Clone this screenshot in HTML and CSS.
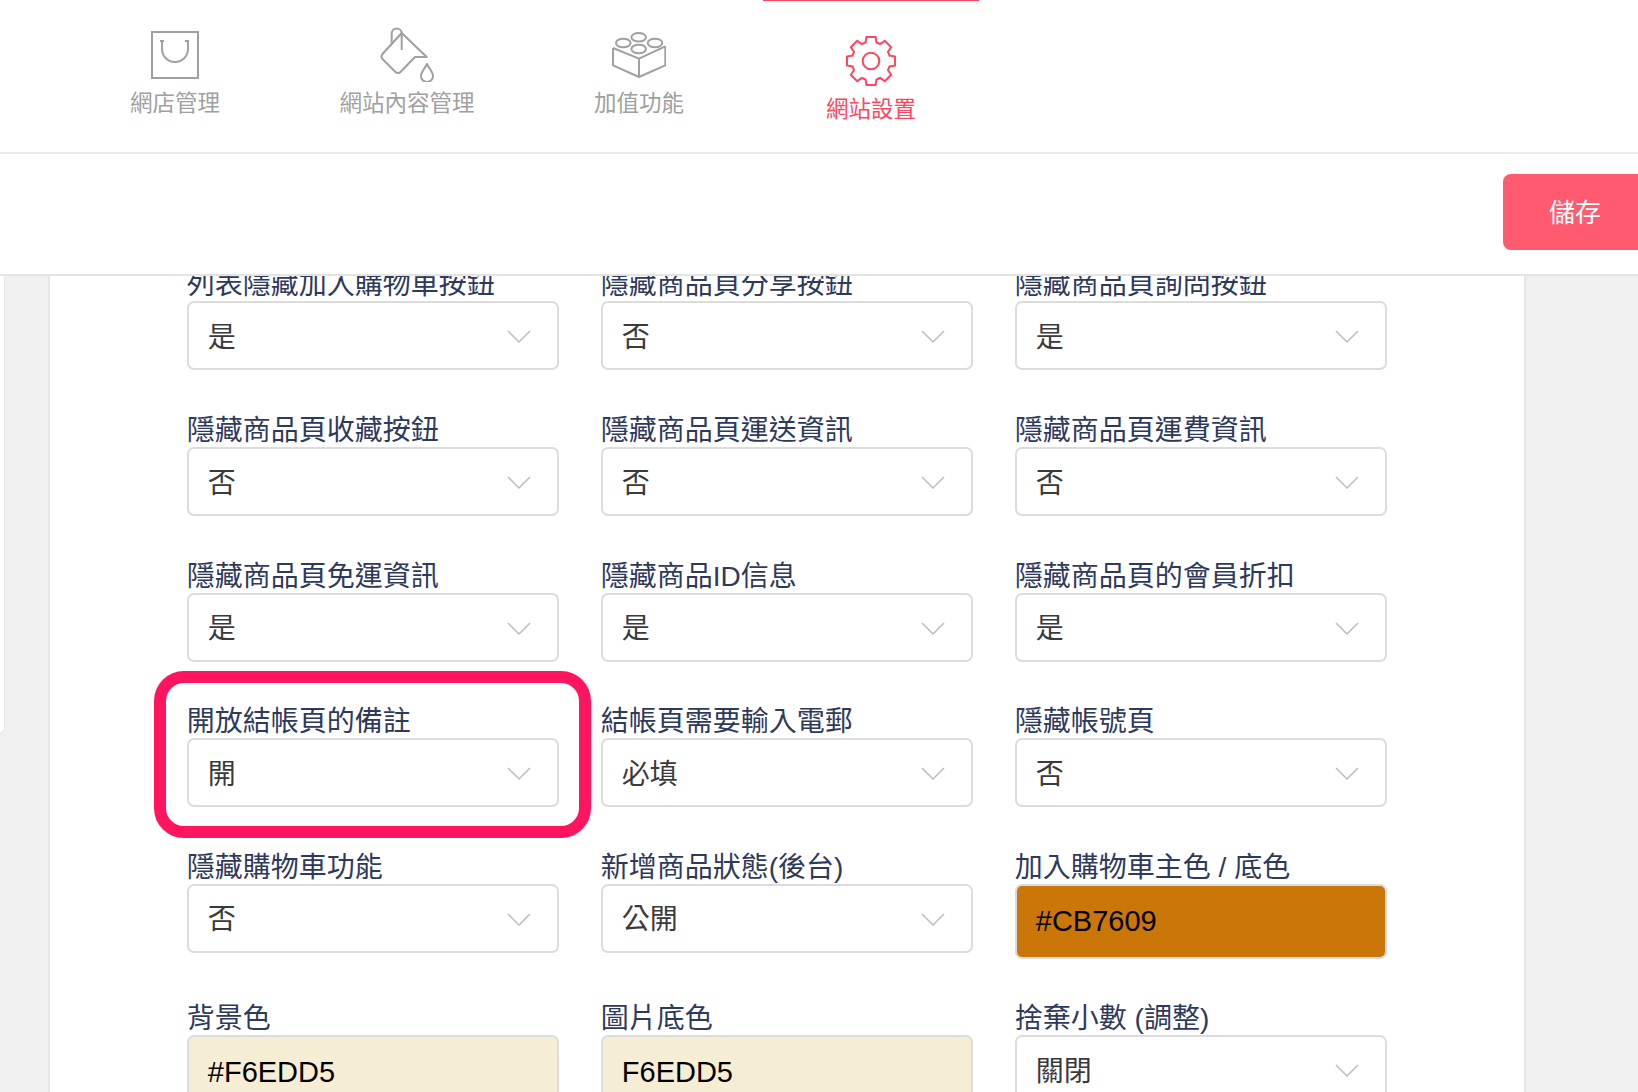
FILE: index.html
```html
<!DOCTYPE html>
<html lang="zh-Hant">
<head>
<meta charset="UTF-8">
<meta name="viewport" content="width=device-width, initial-scale=1.0">
<title>網站設置</title>
<link rel="stylesheet" href="styles.css">
</head>
<body>

<!-- top navigation -->
<nav class="top-nav">
    <a class="nav-tab">
        <span class="nav-icon">
            <svg width="48" height="48" viewBox="0 0 48 48" fill="none" stroke="currentColor" stroke-width="2">
                <rect x="1" y="1" width="46" height="46"/>
                <path d="M9 10h4M34 10h4M11 10v8a13 13 0 0 0 26 0v-8"/>
            </svg>
        </span>
        <span class="nav-label">網店管理</span>
    </a>
    <a class="nav-tab">
        <span class="nav-icon">
            <svg width="54" height="55" viewBox="0 0 54 55" fill="none" stroke="currentColor" stroke-width="2" stroke-linejoin="round">
                <path d="M21.7 6L46.7 30H35L20.5 45a3.5 3.5 0 0 1-5 0L2.5 32a3.5 3.5 0 0 1 0-5z"/>
                <path d="M11.7 16V6.5a5 5 0 0 1 10 0V23"/>
                <path d="M47 37C44.500 42 41 45 41 49a6 6 0 0 0 12 0C53 45 49.500 42 47 37z"/>
            </svg>
        </span>
        <span class="nav-label">網站內容管理</span>
    </a>
    <a class="nav-tab">
        <span class="nav-icon">
            <svg width="54" height="46" viewBox="0 0 54 46" fill="none" stroke="currentColor" stroke-width="2" stroke-linejoin="round">
                <path d="M1 16V33.300L27 45L53.300 33.300V14.300M1 16L27 26.700L53.300 14.300M27 26.700V45"/>
                <ellipse cx="26.700" cy="5.300" rx="7.300" ry="4.300" fill="#fff"/>
                <ellipse cx="11.300" cy="11" rx="7.300" ry="4.300" fill="#fff"/>
                <ellipse cx="43" cy="11" rx="7.300" ry="4.300" fill="#fff"/>
                <ellipse cx="26.700" cy="17" rx="7.300" ry="4.300" fill="#fff"/>
            </svg>
        </span>
        <span class="nav-label">加值功能</span>
    </a>
    <a class="nav-tab active">
        <span class="nav-icon">
            <svg width="50" height="50" viewBox="0 0 50 50" fill="none" stroke="currentColor" stroke-width="2">
                <polygon points="19.500,6.500 20.500,1 29.500,1 30.500,6.500 34.190,8.030 38.790,4.850 45.150,11.210 41.970,15.810 43.500,19.500 49,20.500 49,29.500 43.500,30.500 41.970,34.190 45.150,38.790 38.790,45.150 34.190,41.970 30.500,43.500 29.500,49 20.500,49 19.500,43.500 15.810,41.970 11.210,45.150 4.850,38.790 8.030,34.190 6.500,30.500 1,29.500 1,20.500 6.500,19.500 8.030,15.810 4.850,11.210 11.210,4.850 15.810,8.030"/>
                <circle cx="25" cy="25" r="8.300"/>
            </svg>
        </span>
        <span class="nav-label">網站設置</span>
    </a>
</nav>

<div class="toolbar">
    <button class="save-btn">儲存</button>
</div>

<div class="content">
    <aside class="side-panel"></aside>

    <main class="card">
        <div class="form-grid">
            <div class="field">
                <label>列表隱藏加入購物車按鈕</label>
                <div class="select"><span>是</span><svg class="arrow" width="24" height="13" viewBox="0 0 24 13"><path d="M1 1l11 11L23 1"/></svg></div>
            </div>
            <div class="field">
                <label>隱藏商品頁分享按鈕</label>
                <div class="select"><span>否</span><svg class="arrow" width="24" height="13" viewBox="0 0 24 13"><path d="M1 1l11 11L23 1"/></svg></div>
            </div>
            <div class="field">
                <label>隱藏商品頁詢問按鈕</label>
                <div class="select"><span>是</span><svg class="arrow" width="24" height="13" viewBox="0 0 24 13"><path d="M1 1l11 11L23 1"/></svg></div>
            </div>

            <div class="field">
                <label>隱藏商品頁收藏按鈕</label>
                <div class="select"><span>否</span><svg class="arrow" width="24" height="13" viewBox="0 0 24 13"><path d="M1 1l11 11L23 1"/></svg></div>
            </div>
            <div class="field">
                <label>隱藏商品頁運送資訊</label>
                <div class="select"><span>否</span><svg class="arrow" width="24" height="13" viewBox="0 0 24 13"><path d="M1 1l11 11L23 1"/></svg></div>
            </div>
            <div class="field">
                <label>隱藏商品頁運費資訊</label>
                <div class="select"><span>否</span><svg class="arrow" width="24" height="13" viewBox="0 0 24 13"><path d="M1 1l11 11L23 1"/></svg></div>
            </div>

            <div class="field">
                <label>隱藏商品頁免運資訊</label>
                <div class="select"><span>是</span><svg class="arrow" width="24" height="13" viewBox="0 0 24 13"><path d="M1 1l11 11L23 1"/></svg></div>
            </div>
            <div class="field">
                <label>隱藏商品ID信息</label>
                <div class="select"><span>是</span><svg class="arrow" width="24" height="13" viewBox="0 0 24 13"><path d="M1 1l11 11L23 1"/></svg></div>
            </div>
            <div class="field">
                <label>隱藏商品頁的會員折扣</label>
                <div class="select"><span>是</span><svg class="arrow" width="24" height="13" viewBox="0 0 24 13"><path d="M1 1l11 11L23 1"/></svg></div>
            </div>

            <div class="field marked">
                <label>開放結帳頁的備註</label>
                <div class="select"><span>開</span><svg class="arrow" width="24" height="13" viewBox="0 0 24 13"><path d="M1 1l11 11L23 1"/></svg></div>
            </div>
            <div class="field">
                <label>結帳頁需要輸入電郵</label>
                <div class="select"><span>必填</span><svg class="arrow" width="24" height="13" viewBox="0 0 24 13"><path d="M1 1l11 11L23 1"/></svg></div>
            </div>
            <div class="field">
                <label>隱藏帳號頁</label>
                <div class="select"><span>否</span><svg class="arrow" width="24" height="13" viewBox="0 0 24 13"><path d="M1 1l11 11L23 1"/></svg></div>
            </div>

            <div class="field">
                <label>隱藏購物車功能</label>
                <div class="select"><span>否</span><svg class="arrow" width="24" height="13" viewBox="0 0 24 13"><path d="M1 1l11 11L23 1"/></svg></div>
            </div>
            <div class="field">
                <label>新增商品狀態(後台)</label>
                <div class="select"><span>公開</span><svg class="arrow" width="24" height="13" viewBox="0 0 24 13"><path d="M1 1l11 11L23 1"/></svg></div>
            </div>
            <div class="field">
                <label>加入購物車主色 / 底色</label>
                <div class="color-input swatch-orange">#CB7609</div>
            </div>

            <div class="field">
                <label>背景色</label>
                <div class="color-input swatch-cream">#F6EDD5</div>
            </div>
            <div class="field">
                <label>圖片底色</label>
                <div class="color-input swatch-cream">F6EDD5</div>
            </div>
            <div class="field">
                <label>捨棄小數 (調整)</label>
                <div class="select"><span>關閉</span><svg class="arrow" width="24" height="13" viewBox="0 0 24 13"><path d="M1 1l11 11L23 1"/></svg></div>
            </div>
        </div>
    </main>
</div>

</body>
</html>
```
FILE: styles.css
```css
/* Page */
html, body {
    margin: 0;
    height: 1092px;
    overflow: hidden;
}

body {
    background-color: #f0f0f0;
    font-family: "Liberation Sans", "Noto Sans CJK TC", sans-serif;
}

/* Top navigation */
.top-nav {
    display: flex;
    gap: 16px;
    height: 152px;
    padding-left: 67px;
    background-color: #fff;
    border-bottom: 2px solid #ececec;
}

.nav-tab {
    display: flex;
    flex-direction: column;
    align-items: center;
    width: 216px;
    padding-top: 27px;
    color: #a0a0a0;
}

.nav-tab.active {
    padding-top: 33px;
    color: #ff4560;
    box-shadow: inset 0 1px 0 #ff4560;
}

.nav-icon {
    display: flex;
    align-items: center;
    justify-content: center;
    height: 55px;
}

.nav-label {
    margin-top: 7px;
    font-size: 22.5px;
    line-height: 30px;
}

/* Save bar */
.toolbar {
    display: flex;
    justify-content: flex-end;
    align-items: flex-start;
    box-sizing: border-box;
    height: 122px;
    padding-top: 20px;
    background-color: #fff;
    border-bottom: 2px solid #e4e4e4;
}

.save-btn {
    width: 135px;
    height: 76px;
    padding: 0 0 4px 46px;
    border: 0;
    border-radius: 8px 0 0 8px;
    background-color: #ff5a70;
    color: #fff;
    font-family: inherit;
    font-size: 26px;
    text-align: left;
}

/* Scrolled content */
.content {
    display: flex;
    height: 816px;
    overflow: hidden;
}

.side-panel {
    flex: none;
    width: 4px;
    height: 456px;
    background-color: #fff;
    border-right: 1px solid #e6e6e6;
    border-bottom: 1px solid #e6e6e6;
    border-bottom-right-radius: 8px;
}

.card {
    flex: none;
    width: 1337.5px;
    margin-left: 43px;
    padding-left: 136.8px;
    background-color: #fff;
    border-left: 2px solid #e6e6e6;
    border-right: 2px solid #e6e6e6;
}

.form-grid {
    display: grid;
    grid-template-columns: repeat(3, 372px);
    column-gap: 42px;
    row-gap: 40.6px;
    margin-top: -10.6px;
}

/* Form fields */
.field {
    position: relative;
}

.field label {
    display: block;
    height: 36px;
    color: #2e3a5c;
    font-size: 28px;
    line-height: 39.5px;
}

.select {
    display: flex;
    justify-content: space-between;
    align-items: center;
    box-sizing: border-box;
    height: 69px;
    padding: 0 26px 2px 19px;
    background-color: #fff;
    border: 2px solid #dcdcdc;
    border-radius: 7px;
    color: #3a3a3a;
    font-size: 28px;
}

.arrow {
    margin-top: 4px;
    fill: none;
    stroke: #bdbdbd;
    stroke-width: 1.5;
}

.color-input {
    display: flex;
    align-items: center;
    box-sizing: border-box;
    height: 75px;
    padding-left: 19px;
    border: 2px solid #dcdcdc;
    border-radius: 7px;
    color: #000;
    font-size: 29px;
}

.swatch-orange {
    background-color: #cb7609;
}

.swatch-cream {
    background-color: #f6edd5;
}

/* Pink marker drawn over the field */
.marked::after {
    content: "";
    position: absolute;
    top: -31px;
    left: -33px;
    right: -32px;
    bottom: -31px;
    border: 12px solid #ff145f;
    border-radius: 30px;
}
```
